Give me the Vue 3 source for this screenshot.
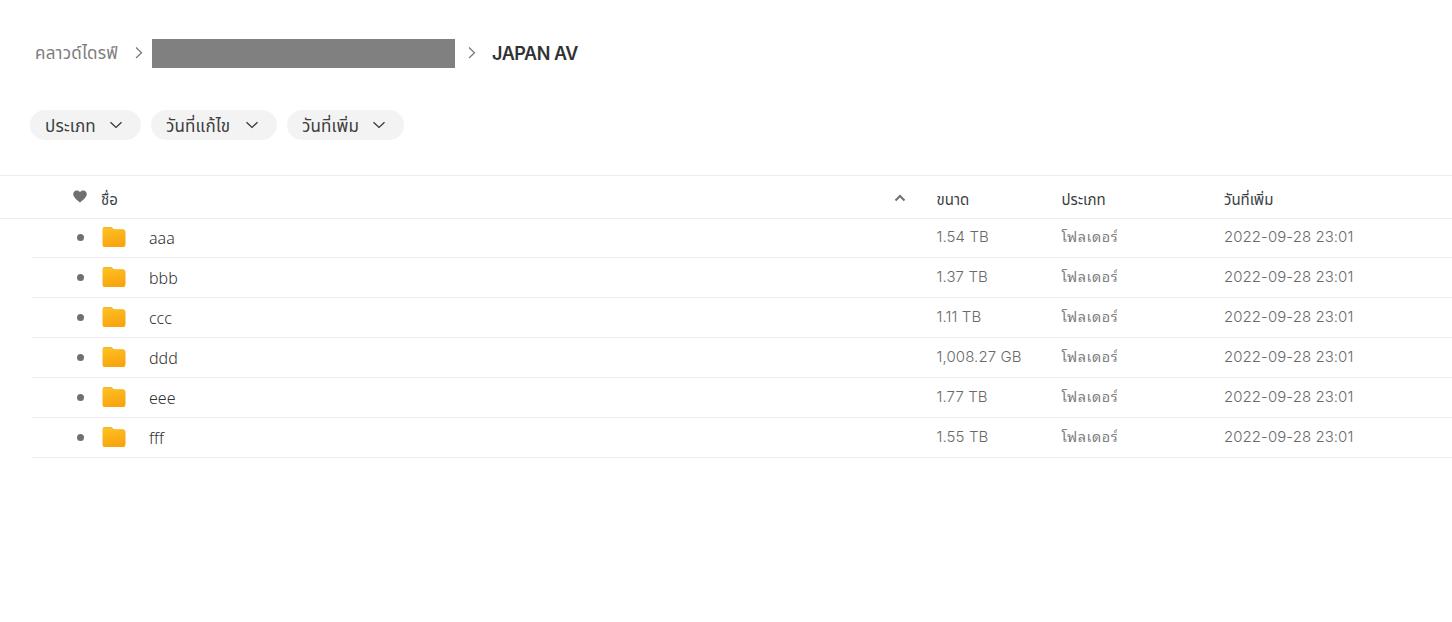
<script setup>
import { ref } from 'vue';

const filters = ref([
  { name: 'type', label: 'ประเภท' },
  { name: 'modified', label: 'วันที่แก้ไข' },
  { name: 'added', label: 'วันที่เพิ่ม' }
]);

const folders = ref([
  { name: 'aaa', size: '1.54 TB', added: '2022-09-28 23:01' },
  { name: 'bbb', size: '1.37 TB', added: '2022-09-28 23:01' },
  { name: 'ccc', size: '1.11 TB', added: '2022-09-28 23:01' },
  { name: 'ddd', size: '1,008.27 GB', added: '2022-09-28 23:01' },
  { name: 'eee', size: '1.77 TB', added: '2022-09-28 23:01' },
  { name: 'fff', size: '1.55 TB', added: '2022-09-28 23:01' }
]);
</script>

<template>
  <div class="drive">
    <nav class="breadcrumb">
      <span class="root">คลาวด์ไดรฟ์</span>
      <svg class="arrow" width="8" height="12" viewBox="0 0 8 12">
        <path d="M1 .5l5.500 5.200L1 11" />
      </svg>
      <span class="redacted"></span>
      <svg class="arrow" width="8" height="12" viewBox="0 0 8 12">
        <path d="M1 .5l5.500 5.200L1 11" />
      </svg>
      <span class="current">JAPAN AV</span>
    </nav>

    <div class="filters">
      <button
        v-for="filter in filters"
        :key="filter.name"
        class="chip"
        :class="filter.name">
        <span>{{ filter.label }}</span>
        <svg width="12" height="8" viewBox="0 0 12 8">
          <path d="M.5 1.200L6 6.500l5.500-5.300" />
        </svg>
      </button>
    </div>

    <div class="table">
      <div class="row header">
        <span class="mark">
          <svg class="heart" width="14" height="13" viewBox="0 0 14 13">
            <path d="M7 12.600C5.800 11.400.2 8 .2 4.100.2 2 1.800.4 3.800.4 5.100.4 6.300 1 7 2 7.700 1 8.900.4 10.200.4c2 0 3.600 1.600 3.600 3.700C13.800 8 8.200 11.400 7 12.600z" />
          </svg>
        </span>
        <span class="label">ชื่อ</span>
        <svg class="sort" width="12" height="8" viewBox="0 0 12 8">
          <path d="M1.500 6.500L6 2l4.500 4.500" />
        </svg>
        <span class="label">ขนาด</span>
        <span class="label">ประเภท</span>
        <span class="label">วันที่เพิ่ม</span>
      </div>
      <div class="body">
        <div v-for="folder in folders" :key="folder.name" class="row item">
          <span class="mark"><i class="dot"></i></span>
          <svg class="folder" width="24" height="20" viewBox="0 0 24 20">
            <defs>
              <linearGradient :id="'fill-' + folder.name" x1="0" y1="0" x2="0.3" y2="1">
                <stop offset="0" stop-color="#ffc125" />
                <stop offset="1" stop-color="#f9a50f" />
              </linearGradient>
            </defs>
            <path d="M2.500 0h6.200c.7 0 1.200.2 1.700.7l1 1c.4.4.8.5 1.400.5H20.700c1.500 0 2.600 1 2.600 2.600v12.600c0 1.600-1 2.600-2.600 2.600H3.300C1.700 20 .7 19 .7 17.400V1.900C.7.700 1.400 0 2.500 0z" fill="#e9b72c" />
            <path d="M.7 3.200c0-1.500.8-2.200 2-2.200h6c.7 0 1.200.2 1.700.6l.9.7c.4.3.8.4 1.400.4h8c1.500 0 2.600 1 2.600 2.500v12.200c0 1.600-1 2.600-2.600 2.600H3.300C1.700 20 .7 19 .7 17.400z" :fill="`url(#fill-${folder.name})`" />
          </svg>
          <span class="name">{{ folder.name }}</span>
          <span class="size">{{ folder.size }}</span>
          <span class="type">โฟลเดอร์</span>
          <span class="added">{{ folder.added }}</span>
        </div>
      </div>
    </div>
  </div>
</template>

<style>
body {
  margin: 0;
  background-color: #fff;
}
</style>

<style scoped>
.drive {
  height: 622px;
  box-sizing: border-box;
  padding-top: 39px;
  overflow: hidden;
  background-color: #fff;
  font-family: Inter, "Noto Sans Thai", "Noto Sans", sans-serif;
  color: #303233;
}

svg {
  display: block;
  flex: none;
}

.breadcrumb {
  display: flex;
  align-items: center;
  height: 29px;
  padding-left: 35px;
  white-space: nowrap;
}

.root {
  width: 100px;
  font-size: 17px;
  letter-spacing: 0.2px;
  color: #7c7c7c;
}

.arrow {
  margin-top: -1px;
}

.arrow path {
  fill: none;
  stroke: #777;
  stroke-width: 1.2;
}

.redacted {
  width: 303px;
  height: 29px;
  margin: 0 13px 0 9px;
  background-color: #808080;
}

.current {
  margin-left: 16px;
  font-size: 18px;
  line-height: 28px;
  font-weight: 600;
  letter-spacing: -0.45px;
}

.filters {
  display: flex;
  gap: 10px;
  margin-top: 42px;
  padding-left: 30px;
}

.chip {
  display: flex;
  align-items: center;
  justify-content: space-between;
  height: 30px;
  padding: 0 19px 0 15px;
  border: none;
  border-radius: 15px;
  background-color: #f3f3f3;
  color: #3c3e3f;
  font-family: inherit;
  font-size: 17px;
  letter-spacing: 0.15px;
  white-space: nowrap;
  cursor: pointer;
}

.chip span {
  padding-top: 3px;
}

.chip.type {
  width: 111px;
}

.chip.modified {
  width: 126px;
}

.chip.added {
  width: 117px;
}

.chip path {
  fill: none;
  stroke: #333;
  stroke-width: 1.2;
}

.table {
  margin-top: 35px;
}

.row {
  display: grid;
  align-items: center;
  box-sizing: border-box;
  white-space: nowrap;
}

.header {
  height: 44px;
  padding-left: 62px;
  grid-template-columns: 39px 793px 42.5px 125px 162.5px 1fr;
  border-top: 1px solid #ececec;
  border-bottom: 1px solid #ececec;
}

.label {
  padding-top: 6px;
  font-size: 15px;
  color: #3c3e3f;
}

.mark {
  display: flex;
  justify-content: center;
  width: 36px;
}

.heart {
  margin-top: -2px;
  fill: #707070;
}

.sort {
  margin-top: 2px;
}

.sort path {
  fill: none;
  stroke: #707070;
  stroke-width: 2;
}

.body {
  margin-left: 32px;
}

.item {
  height: 40px;
  padding: 0 0 2px 30px;
  grid-template-columns: 40px 47px 787.5px 125px 162.5px 1fr;
  border-bottom: 1px solid #ececec;
}

.item:first-child {
  height: 39px;
  padding-bottom: 3px;
}

.item .mark {
  padding-top: 1px;
}

.dot {
  width: 7px;
  height: 7px;
  border-radius: 50%;
  background-color: #707070;
}

.name {
  padding-top: 3px;
  font-family: "Noto Sans", sans-serif;
  font-size: 16px;
  font-weight: 350;
}

.size,
.item .type,
.item .added {
  font-size: 15px;
  font-weight: 300;
  color: #6a6a6a;
}

.item .type {
  padding-bottom: 2px;
  font-family: "Noto Sans Thai Looped", "Noto Looped Thai", Loma, Garuda, Inter, sans-serif;
  font-size: 14.5px;
  font-weight: 400;
  letter-spacing: 0.5px;
  color: #808080;
}

.size {
  letter-spacing: 0.1px;
}

.item .added {
  letter-spacing: 0.05px;
}
</style>
